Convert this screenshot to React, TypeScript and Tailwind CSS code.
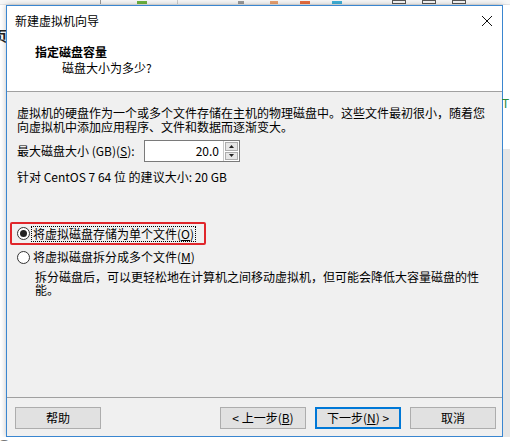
import React from "react";

const font = { fontFamily: '"Noto Sans CJK SC", "Noto Sans", sans-serif' };

function Radio({ checked }: { checked?: boolean }) {
  return (
    <span className="w-[13px] h-[13px] rounded-full border border-[#333] bg-white flex items-center justify-center shrink-0">
      {checked && <span className="w-[7px] h-[7px] rounded-full bg-[#222]" />}
    </span>
  );
}

function Btn({ children, focused }: { children: React.ReactNode; focused?: boolean }) {
  return (
    <button
      className={
        "w-[86px] h-[22px] text-[12px] leading-none text-black flex items-center justify-center bg-[#e1e1e1] " +
        (focused ? "border-2 border-[#0078d7]" : "border border-[#adadad]")
      }
    >
      {children}
    </button>
  );
}

export default function App() {
  return (
    <div className="w-[510px] h-[441px] bg-white overflow-hidden flex flex-col text-black" style={font}>
      {/* background app toolbar strip */}
      <div className="h-[5px] flex items-end shrink-0 bg-[#f7f7f7] border-b border-[#e5e5e5]">
        <span className="w-[60px]" />
        <span className="w-px h-[5px] bg-[#999] ml-[40px]" />
        <span className="w-[10px] h-[3px] bg-[#6db33f] ml-[36px]" />
        <span className="w-px h-[5px] bg-[#ccc] ml-[30px]" />
        <span className="w-[6px] h-[3px] bg-[#999] ml-[60px]" />
        <span className="w-[8px] h-[3px] bg-[#e8a070] ml-[26px]" />
        <span className="w-[10px] h-[3px] bg-[#e86d3f] ml-[22px]" />
        <span className="w-[10px] h-[3px] bg-[#3fb0d8] ml-[22px]" />
        <span className="w-[14px] h-[4px] border border-[#555] ml-[50px]" />
        <span className="w-[14px] h-[4px] border border-[#555] ml-[16px]" />
        <span className="w-[14px] h-[4px] border border-[#555] ml-[16px]" />
      </div>

      <div className="flex flex-1 min-h-0">
        <div className="w-[6px] shrink-0 bg-white flex flex-col">
          <span className="h-[23px]" />
          <span className="text-[14px] leading-none font-bold -ml-[7px] text-[#222]">页</span>
        </div>

        {/* dialog */}
        <div className="w-[497px] h-[432px] shrink-0 border border-[#3a86d0] flex flex-col bg-[#f0f0f0] shadow-[0_0_6px_rgba(0,0,0,0.25)]">
          <div className="bg-white">
            <div className="h-[29px] flex items-center justify-between pl-[8px] pr-[8px]">
              <span className="text-[12px] leading-none">新建虚拟机向导</span>
              <svg width="12" height="12" viewBox="0 0 12 12" className="mr-[1px]">
                <path d="M1 1 L11 11 M11 1 L1 11" stroke="#111" strokeWidth="1" />
              </svg>
            </div>
            <div className="h-[56px] pt-[9px]">
              <div className="pl-[28px] text-[12px] leading-[16px] font-bold">指定磁盘容量</div>
              <div className="pl-[55px] text-[12px] leading-[16px]">磁盘大小为多少?</div>
            </div>
          </div>
          <div className="h-px bg-[#a0a0a0]" />

          <div className="flex-1 px-[10px] pt-[14px] text-[12px]">
            <p className="leading-[14px]">
              虚拟机的硬盘作为一个或多个文件存储在主机的物理磁盘中。这些文件最初很小，随着您
              <br />
              向虚拟机中添加应用程序、文件和数据而逐渐变大。
            </p>

            <div className="flex items-center mt-[6px] h-[22px]">
              <span className="w-[127px] leading-none">
                最大磁盘大小 (GB)(<span className="underline">S</span>):
              </span>
              <div className="flex h-[22px] border border-[#7a7a7a] bg-white">
                <span className="w-[78px] text-right pr-[4px] leading-[20px]">20.0</span>
                <div className="w-[16px] flex flex-col gap-px p-px border-l border-[#c8c8c8]">
                  <span className="flex-1 bg-[#e6e6e6] border border-[#adadad] flex items-center justify-center">
                    <svg width="5" height="3" viewBox="0 0 5 3"><path d="M0 3 L2.5 0 L5 3Z" fill="#222" /></svg>
                  </span>
                  <span className="flex-1 bg-[#e6e6e6] border border-[#adadad] flex items-center justify-center">
                    <svg width="5" height="3" viewBox="0 0 5 3"><path d="M0 0 L5 0 L2.5 3Z" fill="#222" /></svg>
                  </span>
                </div>
              </div>
            </div>

            <p className="leading-[14px] mt-[8px]">针对 CentOS 7 64 位 的建议大小: 20 GB</p>

            <div className="-ml-[7px] mt-[38px] w-[196px] h-[23px] border-2 border-[#e0262b] rounded-[2px] flex items-center pl-[5px]">
              <Radio checked />
              <span className="ml-[1px] border border-dotted border-black leading-[14px] px-px">
                将虚拟磁盘存储为单个文件(<span className="underline">O</span>)
              </span>
            </div>

            <div className="flex items-center mt-[4px] h-[16px]">
              <Radio />
              <span className="ml-[3px] leading-[14px]">
                将虚拟磁盘拆分成多个文件(<span className="underline">M</span>)
              </span>
            </div>

            <p className="pl-[18px] mt-[5px] leading-[13px] w-[465px]">
              拆分磁盘后，可以更轻松地在计算机之间移动虚拟机，但可能会降低大容量磁盘的性能。
            </p>
          </div>

          <div className="h-px bg-[#a0a0a0]" />
          <div className="h-[38px] flex items-start pt-[9px] pl-[8px] pr-[6px]">
            <Btn>帮助</Btn>
            <span className="flex-1" />
            <Btn>
              &lt; 上一步(<span className="underline">B</span>)
            </Btn>
            <span className="w-[9px]" />
            <Btn focused>
              下一步(<span className="underline">N</span>) &gt;
            </Btn>
            <span className="w-[9px]" />
            <Btn>取消</Btn>
          </div>
        </div>

        <div className="flex-1 bg-white flex flex-col">
          <span className="h-[92px]" />
          <span className="text-[12px] leading-none text-[#2a8a3a] -ml-px">T</span>
          <span className="h-[40px]" />
          <span className="flex-1 bg-[#e6e6e6]" />
        </div>
      </div>

      <div className="h-[4px] shrink-0 overflow-hidden bg-white">
        <span className="block text-[22px] leading-[22px] text-[#777] -mt-[2px] -ml-[4px]">Owar</span>
      </div>
    </div>
  );
}
